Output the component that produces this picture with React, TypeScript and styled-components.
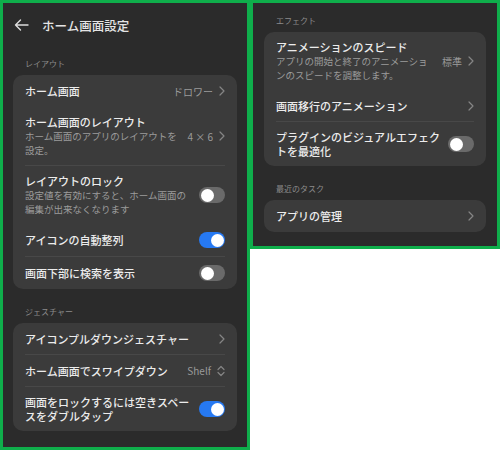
import React from "react";
import styled, { createGlobalStyle } from "styled-components";

const Global = createGlobalStyle`
  html, body { margin: 0; padding: 0; background: #ffffff; }
  body { font-family: "Noto Sans CJK JP", "Noto Sans", sans-serif; }
`;

const Page = styled.div`
  display: flex;
  align-items: flex-start;
  width: 500px;
`;

const Panel = styled.div<{ $h: number; $px: number }>`
  box-sizing: border-box;
  width: 250px;
  height: ${(p) => p.$h}px;
  border: 3px solid #0fae4b;
  background: #2b2b2b;
  padding: 0 ${(p) => p.$px}px;
  overflow: hidden;
`;

const Header = styled.div`
  height: 44px;
  display: flex;
  align-items: center;
  padding-left: 1px;
`;

const HeaderTitle = styled.div`
  margin-left: 13px;
  font-size: 12.5px;
  font-weight: 500;
  color: #e4e4e4;
`;

const SectionLabel = styled.div<{ $top: number }>`
  padding: ${(p) => p.$top}px 12px 6px;
  font-size: 8px;
  line-height: 10px;
  color: #8c8c8c;
`;

const Card = styled.div`
  background: #3b3b3b;
  border-radius: 10px;
  padding: 0 12px;
`;

const Row = styled.div<{ $divider?: boolean }>`
  display: flex;
  align-items: center;
  box-sizing: border-box;
  min-height: 32px;
  padding: 8px 0;
  border-bottom: ${(p) => (p.$divider ? "1px solid rgba(255,255,255,0.07)" : "none")};
`;

const TextCol = styled.div<{ $max?: number }>`
  flex: 1 1 auto;
  min-width: 0;
  max-width: ${(p) => (p.$max ? `${p.$max}px` : "none")};
`;

const Title = styled.div`
  font-size: 11px;
  line-height: 14px;
  font-weight: 500;
  color: #ececec;
`;

const Sub = styled.div`
  font-size: 9.5px;
  line-height: 14px;
  color: #9c9c9c;
`;

const Trail = styled.div`
  margin-left: auto;
  padding-left: 8px;
  display: flex;
  align-items: center;
  gap: 6px;
  flex: none;
`;

const Value = styled.span`
  font-size: 10px;
  color: #9a9a9a;
  font-family: "Noto Sans CJK JP", "Roboto", sans-serif;
`;

const Track = styled.div<{ $on?: boolean }>`
  position: relative;
  width: 26px;
  height: 16px;
  border-radius: 8px;
  background: ${(p) => (p.$on ? "#2679f2" : "#6a6a6a")};
`;

const Knob = styled.div<{ $on?: boolean }>`
  position: absolute;
  top: 1.5px;
  left: ${(p) => (p.$on ? "11.5px" : "1.5px")};
  width: 13px;
  height: 13px;
  border-radius: 50%;
  background: #ffffff;
`;

const Chevron = () => (
  <svg width="6" height="10" viewBox="0 0 6 10">
    <path d="M1 1 L5 5 L1 9" fill="none" stroke="#858585" strokeWidth="1.2" strokeLinecap="round" strokeLinejoin="round" />
  </svg>
);

const UpDown = () => (
  <svg width="8" height="12" viewBox="0 0 8 12">
    <path d="M1 4.5 L4 1.5 L7 4.5 M1 7.5 L4 10.5 L7 7.5" fill="none" stroke="#858585" strokeWidth="1.2" strokeLinecap="round" strokeLinejoin="round" />
  </svg>
);

const BackArrow = () => (
  <svg width="15" height="12" viewBox="0 0 15 12">
    <path d="M14 6 H1.5 M6.5 1 L1.5 6 L6.5 11" fill="none" stroke="#dddddd" strokeWidth="1.4" strokeLinecap="round" strokeLinejoin="round" />
  </svg>
);

const Toggle = ({ on }: { on?: boolean }) => (
  <Track $on={on}>
    <Knob $on={on} />
  </Track>
);

type Item = {
  title: string;
  sub?: string;
  value?: string;
  trail: "chevron" | "updown" | "on" | "off";
  divider?: boolean;
  max?: number;
};

const SettingRow = ({ item }: { item: Item }) => (
  <Row $divider={item.divider}>
    <TextCol $max={item.max}>
      <Title>{item.title}</Title>
      {item.sub && <Sub>{item.sub}</Sub>}
    </TextCol>
    <Trail>
      {item.value && <Value>{item.value}</Value>}
      {item.trail === "chevron" && <Chevron />}
      {item.trail === "updown" && <UpDown />}
      {item.trail === "on" && <Toggle on />}
      {item.trail === "off" && <Toggle />}
    </Trail>
  </Row>
);

const layout: Item[] = [
  { title: "ホーム画面", value: "ドロワー", trail: "chevron" },
  { title: "ホーム画面のレイアウト", sub: "ホーム画面のアプリのレイアウトを設定。", value: "4 × 6", trail: "chevron", divider: true, max: 156 },
  { title: "レイアウトのロック", sub: "設定値を有効にすると、ホーム画面の編集が出来なくなります", trail: "off", max: 166 },
  { title: "アイコンの自動整列", trail: "on", divider: true },
  { title: "画面下部に検索を表示", trail: "off" },
];

const gesture: Item[] = [
  { title: "アイコンプルダウンジェスチャー", trail: "chevron", divider: true },
  { title: "ホーム画面でスワイプダウン", value: "Shelf", trail: "updown", divider: true },
  { title: "画面をロックするには空きスペースをダブルタップ", trail: "on", max: 167 },
];

const effect: Item[] = [
  { title: "アニメーションのスピード", sub: "アプリの開始と終了のアニメーションのスピードを調整します。", value: "標準", trail: "chevron", max: 156 },
  { title: "画面移行のアニメーション", trail: "chevron", divider: true },
  { title: "プラグインのビジュアルエフェクトを最適化", trail: "off", max: 167 },
];

const tasks: Item[] = [{ title: "アプリの管理", trail: "chevron" }];

export default function App() {
  return (
    <>
      <Global />
      <Page>
        <Panel $h={450} $px={10}>
          <Header>
            <BackArrow />
            <HeaderTitle>ホーム画面設定</HeaderTitle>
          </Header>
          <SectionLabel $top={12}>レイアウト</SectionLabel>
          <Card>
            {layout.map((it) => (
              <SettingRow key={it.title} item={it} />
            ))}
          </Card>
          <SectionLabel $top={18}>ジェスチャー</SectionLabel>
          <Card>
            {gesture.map((it) => (
              <SettingRow key={it.title} item={it} />
            ))}
          </Card>
        </Panel>
        <Panel $h={249} $px={11}>
          <SectionLabel $top={13}>エフェクト</SectionLabel>
          <Card>
            {effect.map((it) => (
              <SettingRow key={it.title} item={it} />
            ))}
          </Card>
          <SectionLabel $top={18}>最近のタスク</SectionLabel>
          <Card>
            {tasks.map((it) => (
              <SettingRow key={it.title} item={it} />
            ))}
          </Card>
        </Panel>
      </Page>
    </>
  );
}
